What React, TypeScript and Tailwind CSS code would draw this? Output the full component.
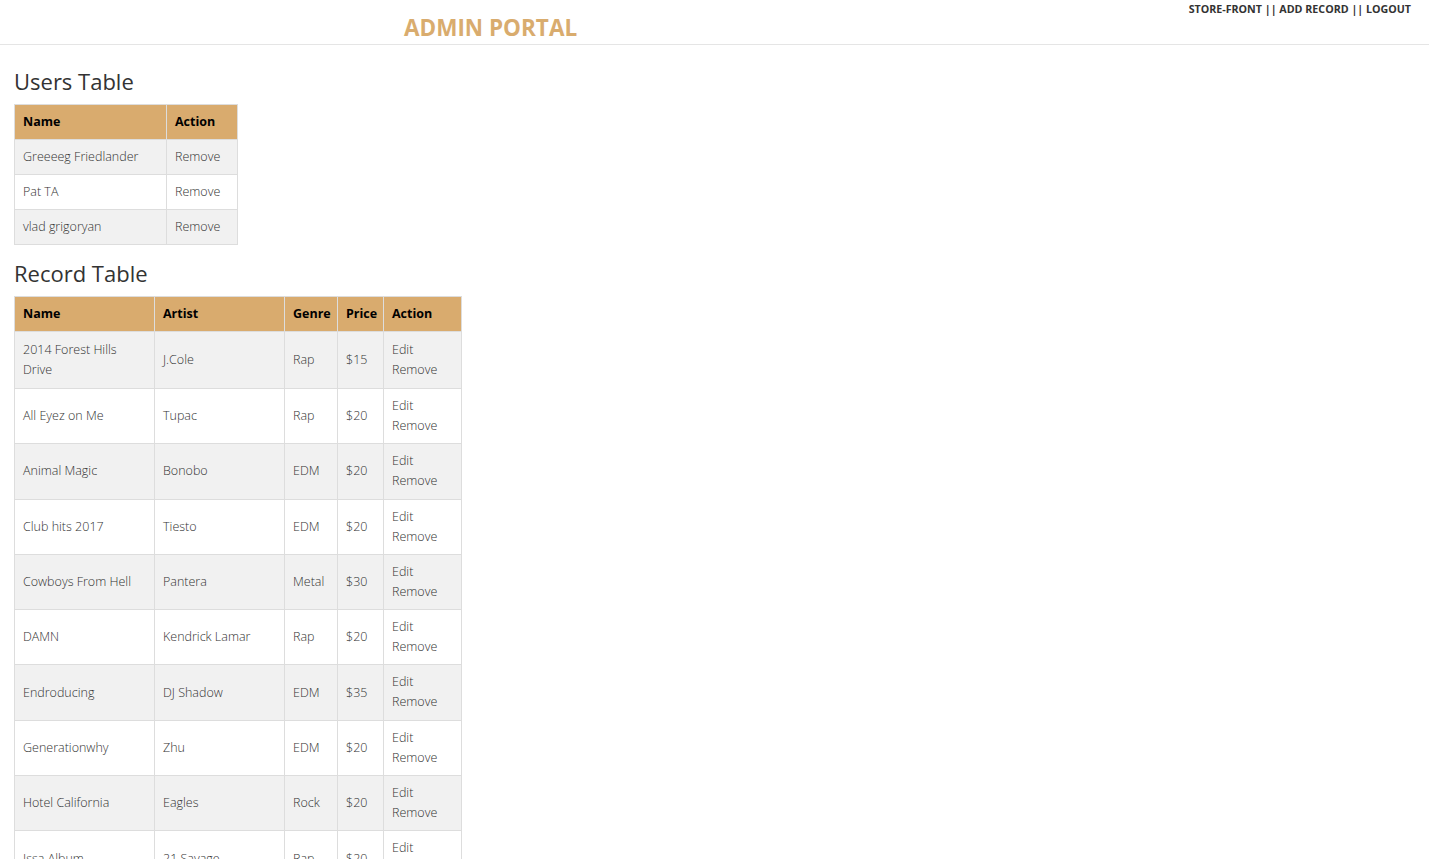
const users = ["Greeeeg Friedlander", "Pat TA", "vlad grigoryan"];

const records = [
  { name: "2014 Forest Hills Drive", artist: "J.Cole", genre: "Rap", price: "$15" },
  { name: "All Eyez on Me", artist: "Tupac", genre: "Rap", price: "$20" },
  { name: "Animal Magic", artist: "Bonobo", genre: "EDM", price: "$20" },
  { name: "Club hits 2017", artist: "Tiesto", genre: "EDM", price: "$20" },
  { name: "Cowboys From Hell", artist: "Pantera", genre: "Metal", price: "$30" },
  { name: "DAMN", artist: "Kendrick Lamar", genre: "Rap", price: "$20" },
  { name: "Endroducing", artist: "DJ Shadow", genre: "EDM", price: "$35" },
  { name: "Generationwhy", artist: "Zhu", genre: "EDM", price: "$20" },
  { name: "Hotel California", artist: "Eagles", genre: "Rock", price: "$20" },
  { name: "Issa Album", artist: "21 Savage", genre: "Rap", price: "$20" },
  { name: "Lemonade", artist: "Beyonce", genre: "Pop", price: "$25" },
];

const th = "border border-[#dddddd] px-2 py-[7px] text-left font-bold text-[12.5px] leading-[20px] text-black";
const td = "border border-[#dddddd] px-2 text-[12.5px] leading-[20px] font-light text-[#333]";

export default function App() {
  return (
    <div className="min-h-screen bg-white text-[#333]" style={{ fontFamily: '"Open Sans", sans-serif' }}>
      <header className="flex items-start justify-between h-[45px] border-b border-[#e5e5e5]">
        <h1 className="pl-[404px] pt-[12px] text-[22.5px] leading-[32px] font-bold text-[#d9ac6e]">ADMIN PORTAL</h1>
        <nav className="pr-[18px] pt-[1px] text-[10.7px] leading-[16px] font-bold text-[#333]">
          STORE-FRONT || ADD RECORD || LOGOUT
        </nav>
      </header>

      <main className="px-[14px]">
        <h2 className="mt-[23px] mb-[10px] text-[22px] leading-[26px] font-normal">Users Table</h2>
        <table className="border-collapse table-fixed w-[223px]">
          <thead>
            <tr className="bg-[#d9ab6e]">
              <th className={`${th} w-[152px]`}>Name</th>
              <th className={`${th} w-[71px]`}>Action</th>
            </tr>
          </thead>
          <tbody>
            {users.map((u, i) => (
              <tr key={u} className={i % 2 === 0 ? "bg-[#f1f1f1]" : "bg-white"}>
                <td className={`${td} py-[7px]`}>{u}</td>
                <td className={`${td} py-[7px]`}>Remove</td>
              </tr>
            ))}
          </tbody>
        </table>

        <h2 className="mt-[15px] mb-[10px] text-[22px] leading-[26px] font-normal">Record Table</h2>
        <table className="border-collapse table-fixed w-[447px]">
          <thead>
            <tr className="bg-[#d9ab6e]">
              <th className={`${th} w-[140px]`}>Name</th>
              <th className={`${th} w-[130px]`}>Artist</th>
              <th className={`${th} w-[53px]`}>Genre</th>
              <th className={`${th} w-[46px]`}>Price</th>
              <th className={`${th} w-[78px]`}>Action</th>
            </tr>
          </thead>
          <tbody>
            {records.map((r, i) => (
              <tr key={r.name} className={i % 2 === 0 ? "bg-[#f1f1f1]" : "bg-white"}>
                <td className={`${td} py-2`}>{r.name}</td>
                <td className={`${td} py-2`}>{r.artist}</td>
                <td className={`${td} py-2`}>{r.genre}</td>
                <td className={`${td} py-2`}>{r.price}</td>
                <td className={`${td} pt-[7px] pb-[7.3px]`}>
                  <div>Edit</div>
                  <div>Remove</div>
                </td>
              </tr>
            ))}
          </tbody>
        </table>
      </main>
    </div>
  );
}
